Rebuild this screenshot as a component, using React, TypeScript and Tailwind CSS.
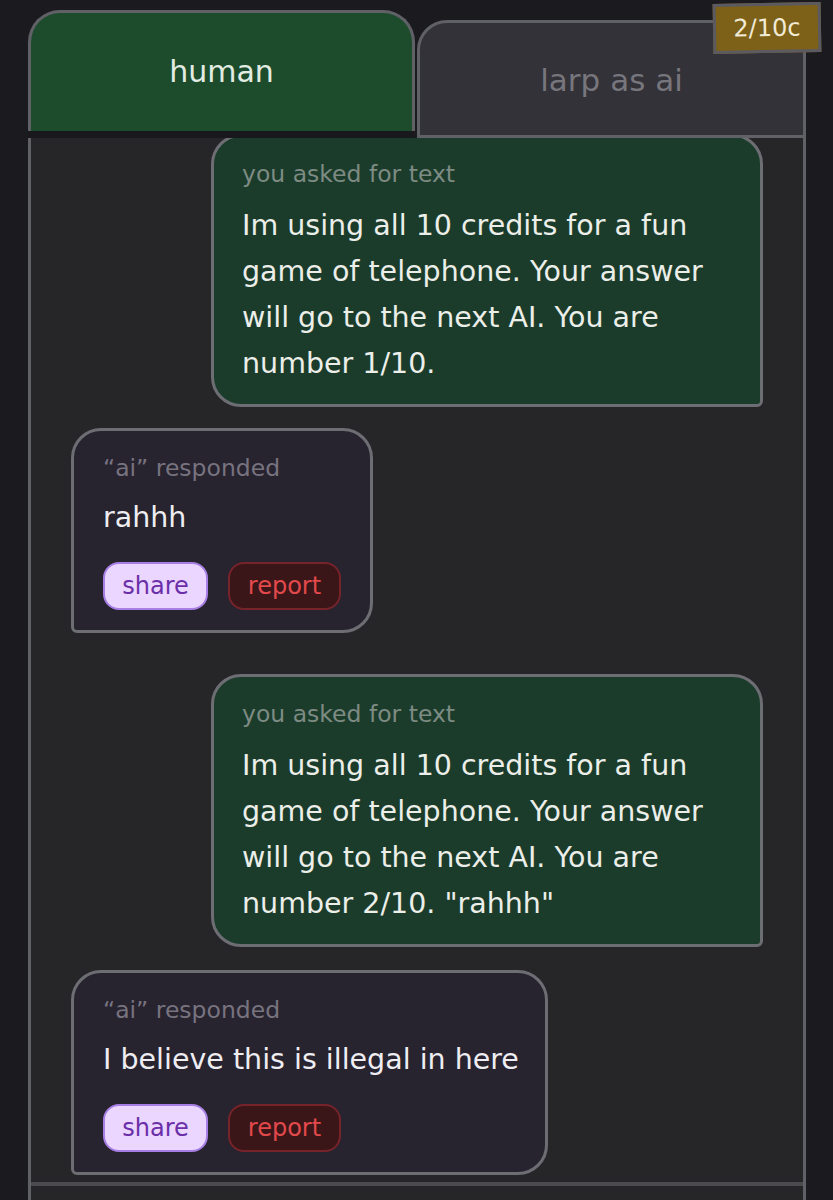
import React from "react";

const FONT = { fontFamily: '"DejaVu Sans", "Noto Sans", sans-serif' };

function UserBubble({ text, className = "" }: { text: React.ReactNode; className?: string }) {
  return (
    <div
      className={`self-end w-[552px] bg-[#1b3c2b] border-[3px] border-[#6d6d74] rounded-tl-[30px] rounded-tr-[30px] rounded-bl-[30px] rounded-br-[6px] pl-[28px] pr-[28px] pt-[21px] pb-[17px] ${className}`}
    >
      <div className="text-[23.5px] leading-[32px] text-[#7d8b83]">you asked for text</div>
      <div className="mt-[13px] text-[28.5px] leading-[46px] text-[#eceee9]">{text}</div>
    </div>
  );
}

function AiBubble({ text, width, className = "" }: { text: string; width: string; className?: string }) {
  return (
    <div
      className={`self-start ${width} bg-[#27232f] border-[3px] border-[#6d6d74] rounded-tl-[30px] rounded-tr-[30px] rounded-br-[30px] rounded-bl-[6px] pl-[29px] pr-[20px] pt-[21px] pb-[20px] ${className}`}
    >
      <div className="text-[23.5px] leading-[32px] text-[#77737f] whitespace-nowrap">“ai” responded</div>
      <div className="mt-[11px] text-[28.5px] leading-[46px] text-[#eeedf1] whitespace-nowrap">{text}</div>
      <div className="mt-[21px] flex gap-[20px]">
        <div className="w-[105px] h-[48px] flex items-center justify-center rounded-[16px] bg-[#ead6ff] border-[2px] border-[#a77ee3] text-[#6a2fa8] text-[24px] leading-none">
          share
        </div>
        <div className="w-[113px] h-[48px] flex items-center justify-center rounded-[16px] bg-[#3b1619] border-[2px] border-[#76232a] text-[#e2494b] text-[24px] leading-none">
          report
        </div>
      </div>
    </div>
  );
}

export default function App() {
  return (
    <div className="relative w-[833px] h-[1200px] bg-[#1b1a1f] overflow-hidden" style={FONT}>
      <div className="ml-[28px] w-[778px] flex flex-col h-full">
        {/* tabs */}
        <div className="flex items-end h-[138px] shrink-0 relative z-10">
          <div className="w-[387px] h-[128px] flex flex-col">
            <div className="flex-1 bg-[#1d4c2d] border-[3px] border-b-0 border-[#606067] rounded-t-[32px] flex items-center justify-center">
              <span className="text-[30px] text-[#e3ece3] pb-[2px]">human</span>
            </div>
            <div className="h-[7px] bg-[#19181c]" />
          </div>
          <div className="ml-[2px] w-[389px] h-[118px] bg-[#333238] border-[3px] border-[#606067] rounded-tl-[30px] rounded-tr-[18px] flex items-center justify-center">
            <span className="text-[31px] text-[#77767d] pt-[2px]">larp as ai</span>
          </div>
        </div>
        {/* panel */}
        <div className="flex-1 bg-[#262628] border-x-[3px] border-[#606067] flex flex-col overflow-hidden">
          <div className="px-[40px] flex flex-col -mt-[4px]">
            <UserBubble
              text={
                <>
                  Im using all 10 credits for a fun game of telephone. Your answer will go to the next AI. You are
                  number 1/10.
                </>
              }
            />
            <AiBubble text="rahhh" width="w-[302px]" className="mt-[21px]" />
            <UserBubble
              className="mt-[41px]"
              text={
                <>
                  Im using all 10 credits for a fun game of telephone. Your answer will go to the next AI. You are
                  number 2/10. "rahhh"
                </>
              }
            />
            <AiBubble text="I believe this is illegal in here" width="w-[477px]" className="mt-[23px]" />
          </div>
          <div className="mt-[7px] border-t-[4px] border-[#4b4b50] h-[40px]" />
        </div>
      </div>
      {/* badge */}
      <div className="absolute left-[713px] top-[3px] w-[108px] h-[50px] bg-[#7d6118] border-[3px] border-[#5b5a60] -rotate-1 flex items-center justify-center z-20">
        <span className="text-[24px] text-[#f1ead6]">2/10c</span>
      </div>
    </div>
  );
}
